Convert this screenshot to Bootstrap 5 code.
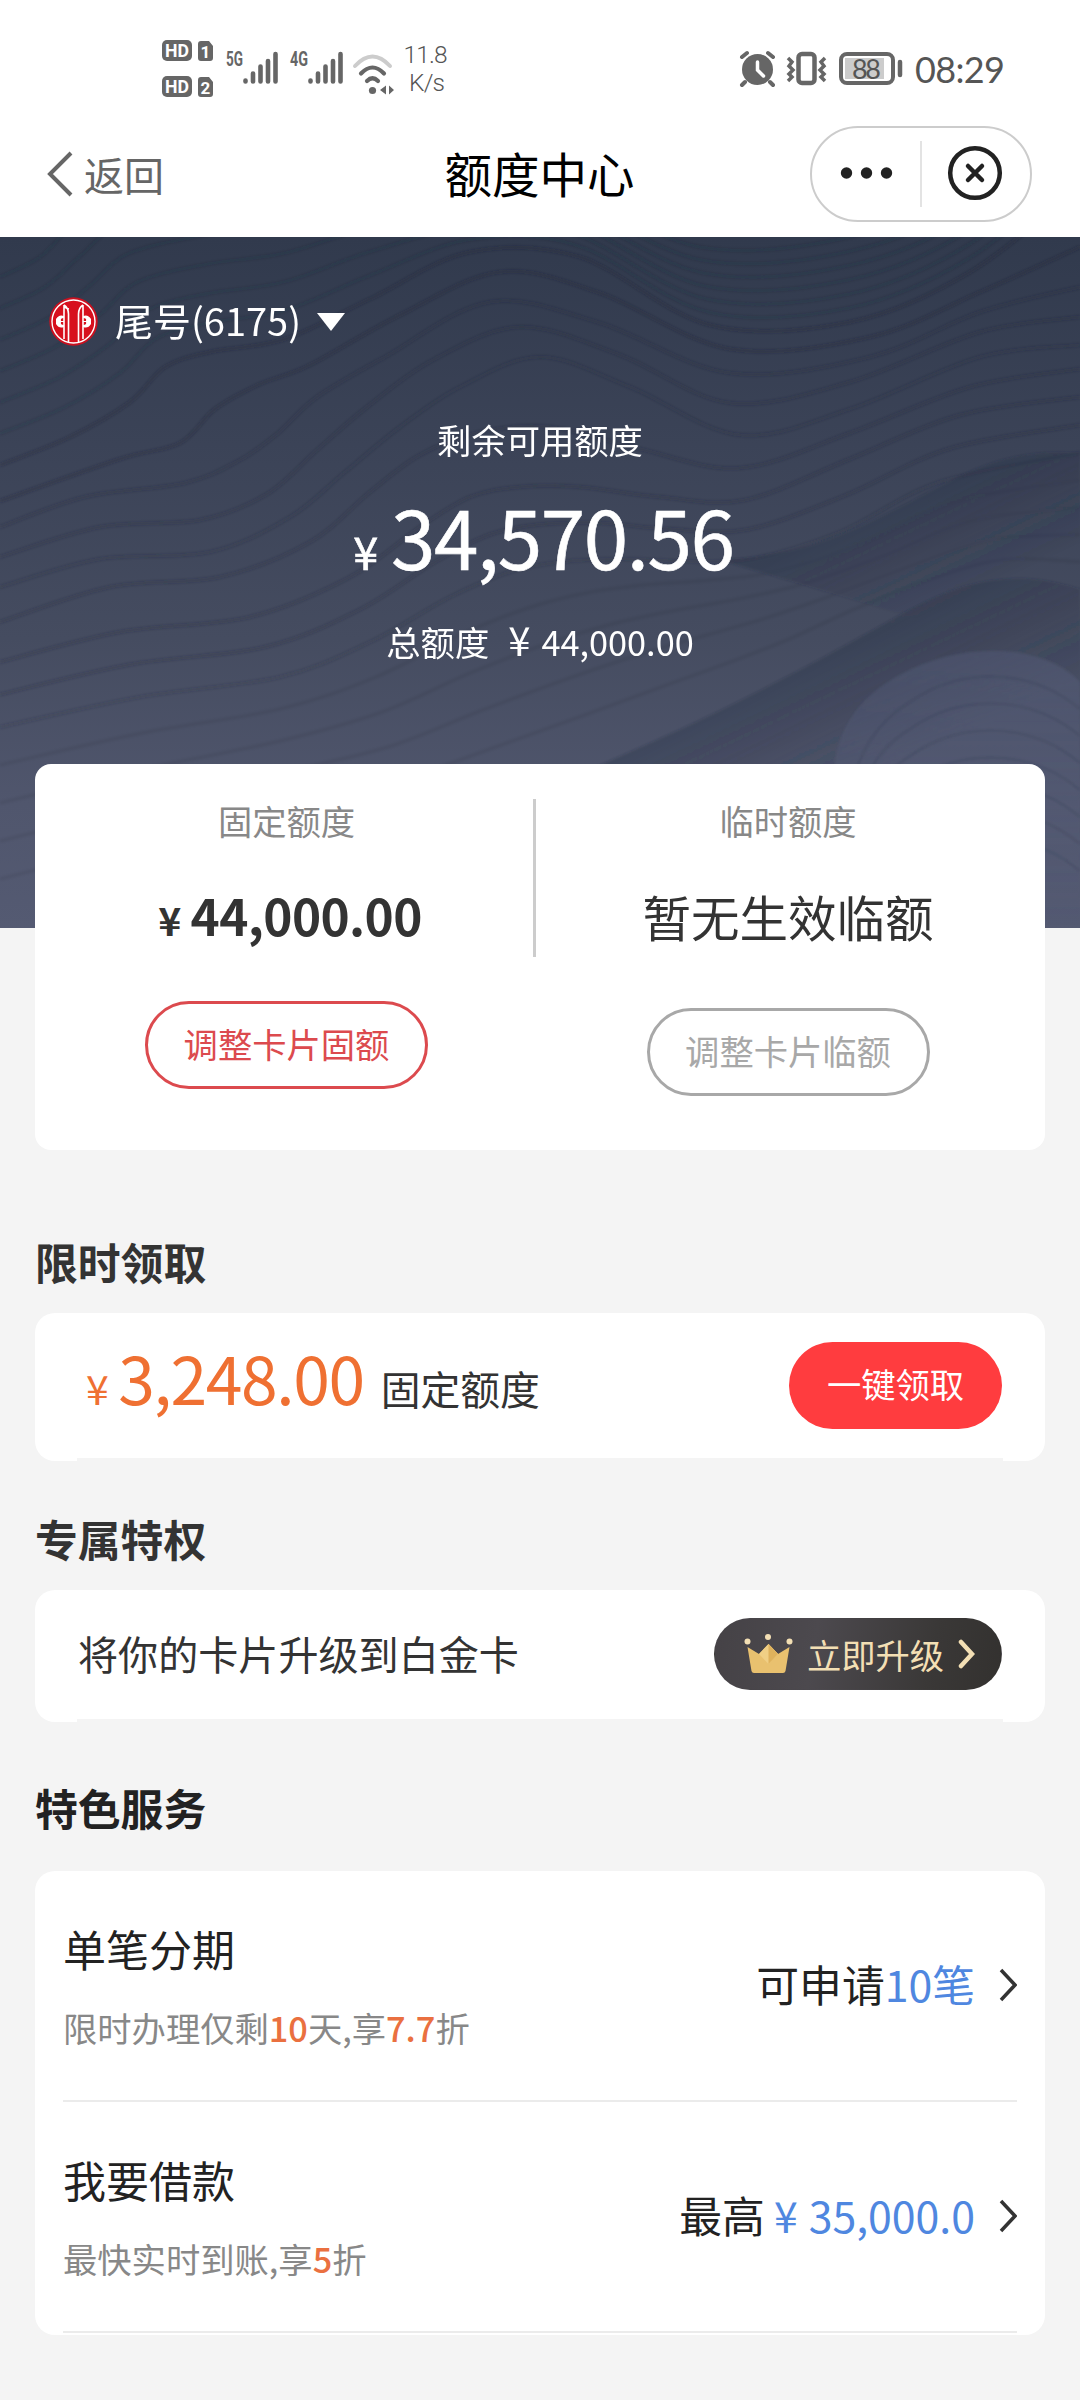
<!DOCTYPE html>
<html lang="zh-CN">
<head>
<meta charset="utf-8">
<meta name="viewport" content="width=device-width, initial-scale=1">
<title>额度中心</title>
<link href="https://cdn.jsdelivr.net/npm/bootstrap@5.3.0/dist/css/bootstrap.min.css" rel="stylesheet">
<style>
body{font-family:"Noto Sans CJK SC",sans-serif;background:#f4f4f4;color:#333;font-size:34.3px;line-height:50px;width:1080px;min-height:2400px;overflow-x:hidden}
svg{display:block;flex:none}
.status{height:111px;padding:30px 70px 0 155px}
.topnav{height:126px;padding:0 48px 0 45px}
.topnav .side{width:330px}
.back{font-size:40px;color:#666;line-height:60px}
.back span{margin-left:10px;padding-bottom:1px}
.page-title{font-size:47.5px;color:#000;line-height:60px;padding:0 0 3px 2px}
.capsule{width:222px;height:96px;border:2px solid #ccc;border-radius:48px}
.hero{height:691px;background:linear-gradient(#313a4d,#3b4357 30%,#454c60 58%,#50566d 82%,#545a72);padding-top:60px}
.hero .waves{position:absolute;inset:0;width:100%;height:100%}
.account{height:49px;padding-left:49px;font-size:38px}
.account .num{margin-left:17px;margin-right:15px;padding-bottom:3px}
.avail-label{margin-top:68px}
.avail{margin-top:26px;height:90px;line-height:90px;font-size:80px;letter-spacing:-1.4px;padding-left:7px;-webkit-text-stroke:.6px #fff}
.avail small{font-size:45px;line-height:1;margin-right:14px}
.total{margin-top:36px}
.total .yen{font-size:40px;line-height:1;margin:0 11px 0 19px}
.panel{margin:0 35px;background:#fff;border-radius:20px;border:0;width:1010px}
.limits{margin-top:-164px;height:386px;border-radius:16px;padding-top:31px}
.limits .fixed{width:498px;padding-left:5px}
.limits .temp{width:504px}
.limits .vline{width:3px;height:158px;margin-top:4px;background:#ccc}
.limits .lbl{color:#888}
.limits .val{height:60px;line-height:60px;margin-top:41px;font-size:48.5px}
.limits .val.amount{font-weight:700;font-size:49.5px;letter-spacing:-.6px;margin-top:40px;padding-left:7px}
.amount small{font-size:39px;line-height:1;margin-right:10px;font-weight:700}
.pill{border:3px solid;border-radius:44px;width:283px;height:88px;font-size:34.3px;line-height:50px;padding:0 0 4px}
.pill-red{color:#dc4a4e;border-color:#dc4a4e;margin-top:56px}
.pill-gray{color:#a8a8a8;border-color:#a8a8a8;margin-top:62px}
.sec{font-size:42.8px;font-weight:700;line-height:50px;margin:0 35px;color:#333}
.notch{position:relative}
.notch::after{content:"";position:absolute;left:42px;right:42px;bottom:0;height:3px;background:#f4f4f4}
.claim{height:148px;margin-top:27px;padding:0 43px 4px 51px}
.claim .money{color:#ef7032;font-size:66px;letter-spacing:-1.4px;line-height:80px}
.claim .money small{font-size:41px;margin-right:11px}
.claim .kind{font-size:39.8px;margin-left:17px}
.btn-claim{background:#ff3c3f;color:#fff;width:213px;height:87px;border-radius:44px;font-size:34.3px;line-height:50px;padding:0 0 4px}
.upgrade{height:132px;margin-top:27px;padding:0 43px 4px 43px}
.upgrade .txt{font-size:40.1px;padding-bottom:2px}
.btn-up{width:288px;height:72px;border-radius:36px;background:linear-gradient(100deg,#454246,#4c494e 35%,#3a3837 75%,#33312f);color:#f3dfb4;font-size:34.3px;line-height:50px;padding:0 26px 0 29px}
.services{height:464px;margin-top:39px;padding:0 28px}
.svc{height:231px;border-bottom:2px solid #ebebeb;color:#222}
.svc .name{font-size:43px;line-height:50px;margin-top:52px}
.svc .sub{color:#888;margin-top:29px;line-height:50px}
.svc b{font-weight:500;color:#ea7040}
.svc .right{font-size:42.8px;line-height:50px;margin-top:86px;height:52px}
.svc .right svg{margin:4px 0 0 24px}
.svc .blue{color:#4f87e0}
.svc .yen{margin:0 11px 0 9px}
</style>
</head>
<body>
<header class="bg-white">
  <div class="status d-flex justify-content-between">
    <svg width="300" height="75" viewBox="155 30 300 75" fill="#666">
      <g fill="#666"><rect x="162" y="40" width="30" height="21" rx="5"/><rect x="162" y="76" width="30" height="21" rx="5"/>
      <path d="M201 41h8l4 5v12q0 3-3 3h-9q-3 0-3-3v-14q0-3 3-3zM201 77h8l4 5v12q0 3-3 3h-9q-3 0-3-3v-14q0-3 3-3z"/></g>
      <g font-family="Roboto" font-weight="700">
        <g fill="#fff" font-size="18"><text x="165" y="57" textLength="24" lengthAdjust="spacingAndGlyphs">HD</text><text x="165" y="93" textLength="24" lengthAdjust="spacingAndGlyphs">HD</text><text x="200.5" y="58" font-size="17">1</text><text x="200.5" y="94" font-size="17">2</text></g>
        <g font-size="20"><text x="226" y="66" textLength="17" lengthAdjust="spacingAndGlyphs">5G</text><text x="290" y="66" textLength="18" lengthAdjust="spacingAndGlyphs">4G</text></g>
      </g>
      <g stroke="#666" stroke-width="4.600" stroke-linecap="round" fill="none">
        <path d="M245.500 81.500v-1M253 81.500v-8M260.500 81.500v-15M268 81.500V61M275.500 81.500V54M310.500 81.500v-1M318 81.500v-8M325.500 81.500v-15M333 81.500V61M340.500 81.500V54"/>
        <path d="M355 68q17.500-19 35 0" transform="translate(0 -2)" stroke="#ccc" stroke-width="4"/><path d="M361 75q11.500-12 23 0M367 82.500q5.500-5.500 11 0" transform="translate(0 -1.500)" stroke-width="4.200"/>
      </g>
      <circle cx="372.500" cy="90.500" r="3.600"/><path d="M386 85.500v9l-6-4.500zM389 85.500v9l5-4.500z"/>
      <g font-family="Roboto" font-weight="300" font-size="24.500" fill="#555"><text x="403.500" y="63" textLength="44">11.8</text><text x="409" y="91" textLength="36">K/s</text></g>
    </svg>
    <svg width="272" height="75" viewBox="738 30 272 75" fill="none" stroke="#666">
      <circle cx="757.500" cy="69.500" r="15.500" fill="#666" stroke="none"/>
      <path d="M742 57l5-4M773 57l-5-4M745 82l-3 3M770 82l3 3" stroke-width="4" stroke-linecap="round"/>
      <path d="M757.500 62v8l6 6" stroke="#fff" stroke-width="3.500" stroke-linecap="round"/>
      <rect x="798.500" y="54" width="16" height="29" rx="3.500" stroke-width="4.500"/>
      <path d="M788 58l4 4-3 4 4 4-4 4 3 3-4 4M825 58l-4 4 3 4-4 4 4 4-3 3 4 4" stroke-width="3.500"/>
      <rect x="841" y="54" width="52" height="29" rx="6" stroke-width="4"/>
      <rect x="845" y="58" width="39" height="21" fill="#ccc" stroke="none"/><path d="M900 62v13" stroke-width="4.500" stroke-linecap="round"/>
      <g fill="#555" stroke="none" font-family="Lato"><text x="852" y="79" font-size="27" textLength="29">88</text><text x="915" y="83" font-size="36" textLength="90">08:29</text></g>
    </svg>
  </div>
  <nav class="topnav d-flex align-items-center justify-content-between">
    <div class="side back d-flex align-items-center">
      <svg width="29" height="46" viewBox="0 0 29 46" fill="none" stroke="#666" stroke-width="4"><path d="M26 2L5 23l21 21"/></svg><span>返回</span>
    </div>
    <div class="page-title">额度中心</div>
    <div class="side d-flex justify-content-end">
      <div class="capsule">
        <svg width="218" height="92" viewBox="812 128 218 92"><g fill="#222"><circle cx="846.500" cy="173" r="5.700"/><circle cx="866.500" cy="173" r="5.700"/><circle cx="886.500" cy="173" r="5.700"/></g><path d="M921 141v66" stroke="#e3e3e3" stroke-width="2"/><circle cx="975" cy="173" r="24.800" fill="none" stroke="#222" stroke-width="4.500"/><path d="M968 166l14 14M982 166l-14 14" stroke="#222" stroke-width="4.500" stroke-linecap="round"/></svg>
      </div>
    </div>
  </nav>
</header>
<section class="hero position-relative text-white">
  <svg class="waves" viewBox="0 0 1080 691">
    <defs>
      <linearGradient id="fold1" gradientUnits="userSpaceOnUse" x1="960" y1="235" x2="1010" y2="340"><stop offset="0" stop-color="#262d42" stop-opacity=".3"/><stop offset="1" stop-color="#262d42" stop-opacity="0"/></linearGradient>
      <linearGradient id="fold2" gradientUnits="userSpaceOnUse" x1="900" y1="375" x2="960" y2="500"><stop offset="0" stop-color="#262d42" stop-opacity=".32"/><stop offset="1" stop-color="#262d42" stop-opacity="0"/></linearGradient>
      <linearGradient id="mound" x1="0" y1="0" x2="0" y2="1"><stop offset="0" stop-color="#7077a0" stop-opacity=".2"/><stop offset="1" stop-color="#7077a0" stop-opacity="0"/></linearGradient>
      <filter id="soft"><feGaussianBlur stdDeviation="1"/></filter>
    </defs>
    <g filter="url(#soft)">
      <path d="M1080 216C1000 210 960 240 900 270C840 302 790 320 720 323L1080 430Z" fill="url(#fold1)"/>
      <path d="M1080 352C1010 330 960 345 900 378C820 422 740 470 560 545L560 691H1080Z" fill="url(#fold2)"/>
      <path d="M1080 445C1040 405 960 405 900 438C860 460 838 490 835 530V691H1080Z" fill="url(#mound)"/>
      <g id="lines" fill="none" stroke="#1d2338" stroke-width="3.500"></g>
    </g>
  </svg>
  <div class="position-relative">
    <div class="account d-flex align-items-center">
      <svg width="49" height="49" viewBox="0 0 49 49"><circle cx="24.500" cy="24.500" r="24.200" fill="#c9101f"/><circle cx="24.500" cy="24.500" r="21.500" fill="#d7101d" stroke="#fff" stroke-width="1.400"/>
      <g fill="none" stroke="#fff" stroke-width="1.600"><path d="M15 8q4.500 3 4.500 9v28.500M15 8v34M15 8q0 3 5 4M34 8q-4.500 3-4.500 9v28.500M34 8v34"/></g><path d="M15 19q-5-2-8 3v5q3 5 8 3v-2q-4 0-3-3h3v-1h-3q-1-3 3-3zM34 19q5-2 8 3v5q-3 5-8 3v-2q4 0 3-3h-3v-1h3q1-3-3-3z" fill="#fff" transform="translate(0 0)"/></svg>
      <span class="num">尾号(6175)</span>
      <svg width="30" height="18" viewBox="0 0 30 18"><path d="M1 0h28L15 18z" fill="#fff"/></svg>
    </div>
    <div class="avail-label text-center">剩余可用额度</div>
    <div class="avail d-flex justify-content-center align-items-baseline"><small>¥</small><span>34,570.56</span></div>
    <div class="total d-flex justify-content-center align-items-baseline"><span>总额度</span><span class="yen">¥</span><span>44,000.00</span></div>
  </div>
</section>
<main>
  <section class="card panel limits position-relative flex-row">
    <div class="fixed d-flex flex-column align-items-center"><div class="lbl">固定额度</div><div class="val amount d-flex align-items-baseline"><small>¥</small><span>44,000.00</span></div><button class="btn pill pill-red">调整卡片固额</button></div>
    <div class="vline"></div>
    <div class="temp d-flex flex-column align-items-center"><div class="lbl">临时额度</div><div class="val">暂无生效临额</div><button class="btn pill pill-gray">调整卡片临额</button></div>
  </section>
  <h2 class="sec" style="margin-top:86px">限时领取</h2>
  <section class="card panel notch claim flex-row align-items-center justify-content-between">
    <div class="d-flex align-items-baseline mb-2"><div class="money"><small>¥</small>3,248.00</div><div class="kind">固定额度</div></div>
    <button class="btn btn-claim">一键领取</button>
  </section>
  <h2 class="sec" style="margin-top:52px">专属特权</h2>
  <section class="card panel notch upgrade flex-row align-items-center justify-content-between">
    <div class="txt">将你的卡片升级到白金卡</div>
    <button class="btn btn-up d-flex align-items-center justify-content-between">
      <svg width="49" height="40" viewBox="0 0 49 40" fill="#e9c16f"><path d="M3.500 13l11.500 7 9.500-10 9.500 10 11.500-7-4 24q-.5 2-2.500 2h-29q-2 0-2.500-2z"/><path d="M24.500 10l9.500 10-9.500 10-9.500-10z" fill="#f0cf85"/><path d="M24.500 10v20l9.500-10z" fill="#dfb25c"/><g fill="#f3dfb4"><circle cx="3.500" cy="7.500" r="3"/><circle cx="24" cy="3" r="3"/><circle cx="45.500" cy="7.500" r="3"/></g></svg>
      <span>立即升级</span>
      <svg width="17" height="30" viewBox="0 0 17 30" fill="none" stroke="#f3dfb4" stroke-width="4.500" stroke-linecap="round"><path d="M3 3l11 12L3 27"/></svg>
    </button>
  </section>
  <h2 class="sec" style="margin-top:60px;color:#222">特色服务</h2>
  <section class="card panel services">
    <div class="svc d-flex justify-content-between">
      <div><div class="name">单笔分期</div><div class="sub">限时办理仅剩<b>10</b>天,享<b>7.7</b>折</div></div>
      <div class="right d-flex align-items-center"><span>可申请<span class="blue">10笔</span></span><svg width="18" height="34" viewBox="0 0 18 34" fill="none" stroke="#333" stroke-width="3.500"><path d="M2 2l14 15L2 32"/></svg></div>
    </div>
    <div class="svc d-flex justify-content-between">
      <div><div class="name">我要借款</div><div class="sub">最快实时到账,享<b>5</b>折</div></div>
      <div class="right d-flex align-items-center"><span>最高<span class="blue"><span class="yen">¥</span>35,000.0</span></span><svg width="18" height="34" viewBox="0 0 18 34" fill="none" stroke="#333" stroke-width="3.500"><path d="M2 2l14 15L2 32"/></svg></div>
    </div>
  </section>
</main>
<script src="https://cdn.jsdelivr.net/npm/bootstrap@5.3.0/dist/js/bootstrap.bundle.min.js"></script>
<script>
// Contour lines: [lines until next curve, opacity, thirteen x,y points]; extra lines are blended between neighbours.
const keys=[
 [6,.13,[0,40,40,20,70,-10,110,-40,200,-60,285,-70,370,-80,470,-60,560,-50,700,10,850,0,970,-50,1080,-160]],
 [1,.26,[0,228,70,200,130,165,165,130,210,115,285,102,370,62,470,15,580,20,710,88,850,85,970,35,1080,-50]],
 [1,.26,[0,264,120,222,180,206,215,172,260,147,310,128,400,78,500,35,600,56,730,112,870,100,980,55,1080,10]],
 [1,.2,[0,290,85,260,185,246,240,223,277,197,317,160,385,120,490,65,600,86,730,136,870,120,980,75,1080,50]],
 [1,.2,[0,320,100,290,200,283,267,257,317,213,367,170,433,123,520,90,620,118,730,166,850,145,980,95,1080,80]],
 [1,.18,[0,350,100,322,210,315,290,280,345,235,400,190,460,150,540,120,630,150,740,198,850,172,980,120,1080,108]],
 [1,.2,[0,385,110,350,220,340,310,305,370,255,420,218,480,195,550,190,640,212,740,231,850,196,970,150,1080,132]],
 [2,.2,[0,425,120,395,250,380,350,340,420,290,470,260,520,250,580,250,660,260,745,263,850,222,960,178,1080,160]],
 [5,.16,[0,490,140,460,280,440,370,405,450,360,510,335,560,325,620,322,680,324,750,322,840,295,940,245,1080,216]],
 [1,.12,[0,680,150,640,280,600,400,580,500,550,600,515,690,480,760,450,820,420,880,385,950,355,1020,342,1080,352]]];
const smooth=a=>{const p=[];for(let i=0;i<a.length;i+=2)p.push([a[i],a[i+1]]);
 let d='M'+p[0];
 for(let i=0;i<p.length-1;i++){const m=p[i-1]||p[i],s=p[i],e=p[i+1],n=p[i+2]||e;
  d+='C'+[s[0]+(e[0]-m[0])/6,s[1]+(e[1]-m[1])/6,e[0]-(n[0]-s[0])/6,e[1]-(n[1]-s[1])/6,e[0],e[1]]}
 return d};
const g=document.getElementById('lines');
const add=(d,o)=>{const e=document.createElementNS('http://www.w3.org/2000/svg','path');e.setAttribute('d',d);e.setAttribute('opacity',o);g.appendChild(e)};
keys.forEach(([n,o,k],i)=>{const next=keys[i+1];
 for(let j=0;next&&j<n;j++)add(smooth(k.map((v,q)=>v+(next[2][q]-v)*j/n)),j&&i===8?.06:o)});
for(let i=0;i<7;i++)add(`M1080 ${472+i*27}C1030 ${430+i*27} 960 ${430+i*27} 910 ${465+i*27}Q860 ${495+i*27} ${850+i*6} ${560+i*27}`,.1);
</script>
</body>
</html>
